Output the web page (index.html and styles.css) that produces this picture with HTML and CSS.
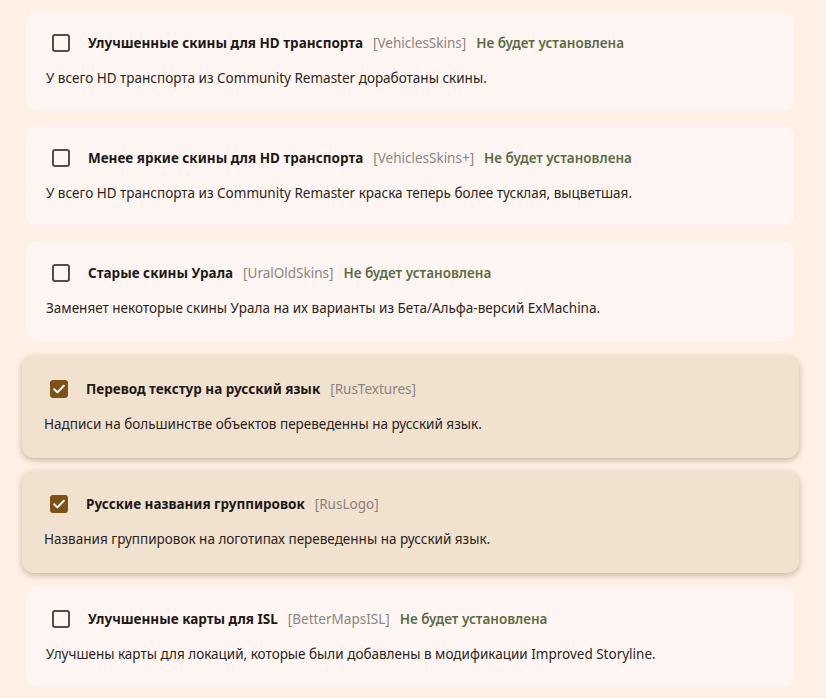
FILE: index.html
```html
<!DOCTYPE html>
<html lang="ru">
<head>
<meta charset="utf-8">
<link rel="stylesheet" href="styles.css">
</head>
<body>
<div class="list">
  <div class="card">
    <div class="head">
      <span class="box"></span>
      <span class="title">Улучшенные скины для HD транспорта</span>
      <span class="tag">[VehiclesSkins]</span>
      <span class="status">Не будет установлена</span>
    </div>
    <div class="desc">У всего HD транспорта из Community Remaster доработаны скины.</div>
  </div>
  <div class="card">
    <div class="head">
      <span class="box"></span>
      <span class="title">Менее яркие скины для HD транспорта</span>
      <span class="tag">[VehiclesSkins+]</span>
      <span class="status">Не будет установлена</span>
    </div>
    <div class="desc">У всего HD транспорта из Community Remaster краска теперь более тусклая, выцветшая.</div>
  </div>
  <div class="card">
    <div class="head">
      <span class="box"></span>
      <span class="title">Старые скины Урала</span>
      <span class="tag">[UralOldSkins]</span>
      <span class="status">Не будет установлена</span>
    </div>
    <div class="desc">Заменяет некоторые скины Урала на их варианты из Бета/Альфа-версий ExMachina.</div>
  </div>
  <div class="card selected">
    <div class="head">
      <span class="box checked"><svg viewBox="0 0 18 18" width="18" height="18"><path d="M4.2 9.3l3.2 3.1 6.4-6.6" fill="none" stroke="#fff" stroke-width="2" stroke-linecap="round" stroke-linejoin="round"/></svg></span>
      <span class="title">Перевод текстур на русский язык</span>
      <span class="tag">[RusTextures]</span>
    </div>
    <div class="desc">Надписи на большинстве объектов переведенны на русский язык.</div>
  </div>
  <div class="card selected">
    <div class="head">
      <span class="box checked"><svg viewBox="0 0 18 18" width="18" height="18"><path d="M4.2 9.3l3.2 3.1 6.4-6.6" fill="none" stroke="#fff" stroke-width="2" stroke-linecap="round" stroke-linejoin="round"/></svg></span>
      <span class="title">Русские названия группировок</span>
      <span class="tag">[RusLogo]</span>
    </div>
    <div class="desc">Названия группировок на логотипах переведенны на русский язык.</div>
  </div>
  <div class="card">
    <div class="head">
      <span class="box"></span>
      <span class="title">Улучшенные карты для ISL</span>
      <span class="tag">[BetterMapsISL]</span>
      <span class="status">Не будет установлена</span>
    </div>
    <div class="desc">Улучшены карты для локаций, которые были добавлены в модификации Improved Storyline.</div>
  </div>
</div>
</body>
</html>
```
FILE: styles.css
```css
html, body {
  margin: 0;
  padding: 0;
  background: #fef0e4;
  font-family: "Noto Sans", "Open Sans", sans-serif;
  color: #2a2420;
}
.list {
  display: flex;
  flex-direction: column;
  gap: 15.2px;
  padding: 11px 32px 0 26px;
}
.card {
  background: #fff6f3;
  border-radius: 12px;
  height: 100px;
  box-sizing: border-box;
  padding: 20px 20px 0 20px;
}
.card.selected {
  background: #f1e1cf;
  height: 102px;
  margin: -1px -5px -1px -4px;
  padding: 21px 22px 0 22px;
  box-shadow: 0 2px 6px rgba(90, 60, 30, 0.35);
}
.head {
  display: flex;
  align-items: center;
  height: 24px;
  margin-left: 6px;
}
.box {
  width: 18px;
  height: 18px;
  box-sizing: border-box;
  border: 2px solid #574c44;
  border-radius: 3px;
  flex: none;
  margin-right: 18px;
  display: flex;
  align-items: center;
  justify-content: center;
}
.box.checked {
  background: #7d5118;
  border-color: #7d5118;
}
.box svg {
  display: block;
  flex: none;
}
.title {
  font-size: 13.5px;
  font-weight: 700;
  color: #1e1916;
  margin-right: 10px;
}
.tag {
  font-size: 13.5px;
  color: #8b847f;
  margin-right: 10px;
}
.status {
  font-size: 13.5px;
  font-weight: 600;
  color: #5b6c44;
}
.desc {
  margin-top: 14px;
  font-size: 13.5px;
  line-height: 18px;
  color: #2a2420;
}
```
